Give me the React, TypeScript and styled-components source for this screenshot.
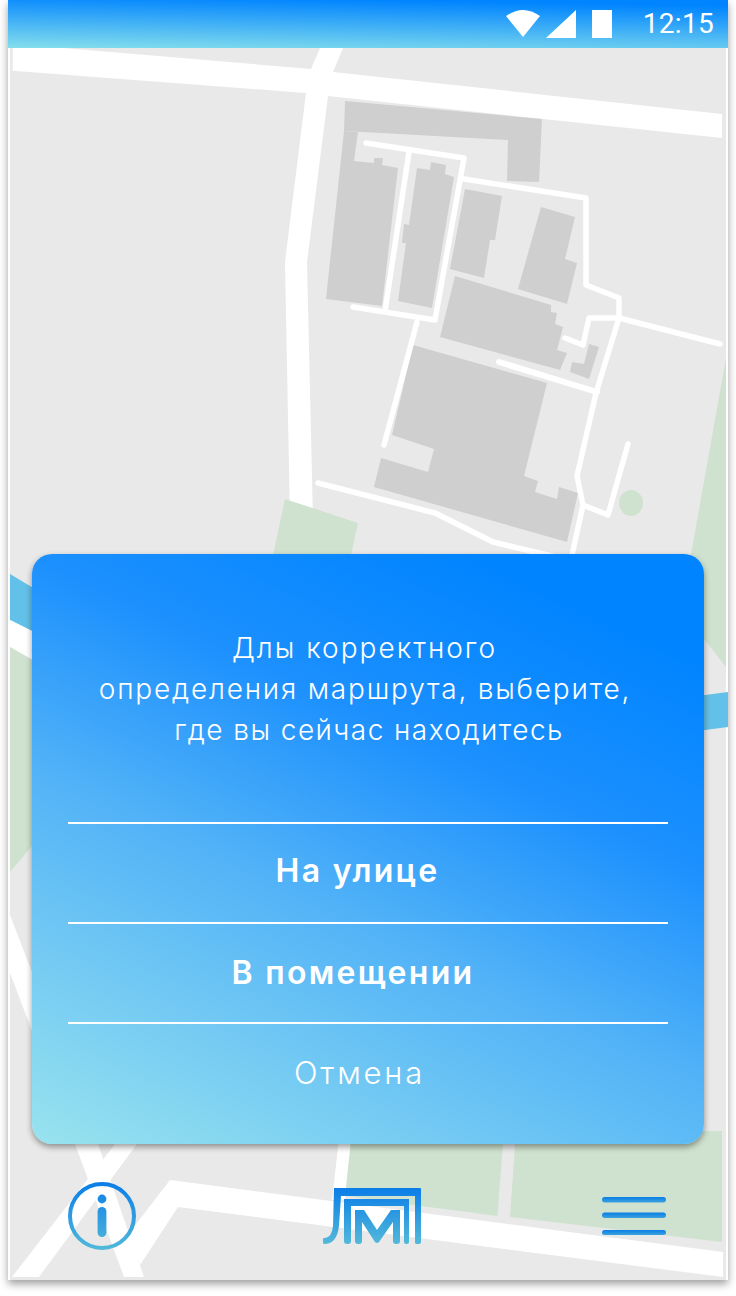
import React from "react";
import styled, { createGlobalStyle } from "styled-components";

const GlobalStyle = createGlobalStyle`
  html, body {
    margin: 0;
    padding: 0;
    background: #ffffff;
  }
`;

const Page = styled.div`
  width: 736px;
  height: 1296px;
  padding: 0 8px;
  box-sizing: border-box;
  overflow: hidden;
`;

const Phone = styled.div`
  width: 720px;
  height: 1280px;
  background: #ffffff;
  display: flex;
  flex-direction: column;
  box-shadow: 0 4px 8px rgba(0, 0, 0, 0.38);
`;

const StatusBar = styled.div`
  height: 48px;
  flex: none;
  display: flex;
  align-items: center;
  justify-content: flex-end;
  padding-right: 14px;
  background: linear-gradient(181deg, #0084ff 10%, #84deec 100%);
  position: relative;
  z-index: 2;
`;

const StatusIcon = styled.svg<{ $gap: number }>`
  display: block;
  margin-right: ${(p) => p.$gap}px;
  fill: #ffffff;
`;

const Clock = styled.span`
  font-family: Roboto, sans-serif;
  font-size: 28px;
  color: #ffffff;
  line-height: 48px;
  letter-spacing: 0.3px;
`;

const Screen = styled.div`
  position: relative;
  flex: 1;
  display: flex;
  flex-direction: column;
  padding: 506px 24px 0;
`;

const MapCanvas = styled.svg`
  position: absolute;
  top: 0;
  left: 0;
`;

const Dialog = styled.div`
  position: relative;
  height: 590px;
  box-sizing: border-box;
  padding: 74px 36px 0;
  border-radius: 20px;
  background: linear-gradient(
    205deg,
    #0084ff 12%,
    #1c90fe 35%,
    #51b2f7 58%,
    #98e3ee 100%
  );
  box-shadow: 0 3px 6px rgba(0, 0, 0, 0.4);
  font-family: Inter, "Noto Sans", sans-serif;
  color: #ffffff;
  text-align: center;
`;

const Message = styled.div`
  height: 194px;
  box-sizing: border-box;
`;

const MessageLine = styled.div<{ $left?: number; $right?: number; $tracking: number }>`
  font-size: 28px;
  font-weight: 300;
  line-height: 41px;
  letter-spacing: ${(p) => p.$tracking}px;
  white-space: nowrap;
  padding-left: ${(p) => p.$left || 0}px;
  padding-right: ${(p) => p.$right || 0}px;
`;

const Option = styled.div<{ $shift: number; $lift: number; $muted?: boolean }>`
  height: 100px;
  box-sizing: border-box;
  border-top: 2px solid #ffffff;
  display: flex;
  align-items: center;
  justify-content: center;
  padding-right: ${(p) => p.$shift}px;
  padding-bottom: ${(p) => p.$lift}px;
  font-size: ${(p) => (p.$muted ? 31 : 32)}px;
  font-weight: ${(p) => (p.$muted ? 300 : 600)};
  letter-spacing: ${(p) => (p.$muted ? 2.8 : 2.3)}px;
`;

const BottomNav = styled.div`
  position: relative;
  display: flex;
  align-items: center;
  height: 68px;
  margin-top: 38px;
  padding-left: 36px;
`;

const NavIcon = styled.svg<{ $gap?: number }>`
  display: block;
  flex: none;
  margin-left: ${(p) => p.$gap || 0}px;
`;

const CityMap = () => (
  <MapCanvas width="720" height="1232" viewBox="8 48 720 1232">
    <rect x="10" y="48" width="716" height="1232" fill="#e9e9e9" />

    {/* rivers */}
    <g fill="#63c0e8">
      <polygon points="10,574 50,598 50,640 10,620" />
      <polygon points="690,697 728,692 728,727 690,732" />
    </g>

    {/* main roads */}
    <g fill="#ffffff">
      <polygon points="12.7,48 63,48 311,69 320,48 343,48 333,72 722,114 722,138 328,96 307,262 313,520 290,520 285,262 306,93 12.7,70.7" />
      <polygon points="10,620 50,640 50,670 10,647" />
      <polygon points="10,915 98,1144 144,1277 124,1277 75,1144 10,973" />
      <polygon points="115,1144 137,1144 39,1277 12,1277" />
      <polygon points="170,1180 723,1252 723,1277 178,1207 140,1265 127,1232 130,1232" />
      <polygon points="340,1130 354,1130 345,1200 332,1200" />
    </g>

    {/* parks */}
    <g fill="#cfe2cf">
      <polygon points="285,499 358,523 350,560 272,560" />
      <polygon points="726,358 726,667 700,634 690,560" />
      <polygon points="10,647 50,670 50,825 10,872" />
      <polygon points="352,1131 504,1131 497.5,1216 345,1196" />
      <polygon points="516,1131 722,1131 722,1242 510,1217" />
      <ellipse cx="631" cy="503" rx="12" ry="13" />
    </g>

    {/* buildings */}
    <g fill="#cfcfcf">
      <polygon points="345,101 542,119 539,182 507,181 508,140 344,131" />
      <polygon points="344,131 358,132 354,161 374,163 374,158 383,158 382,165 398,168 382,306 326,299" />
      <polygon points="417,168 430,170 431,162 446,165 445,174 454,177 432,308 398,301 406,243 402,243 404,224 409,225" />
      <polygon points="465,189 502,196 495,240 490,240 484,278 450,269" />
      <polygon points="541,207 575,217 565,259 577,263 567,304 518,289" />
      <polygon points="455,276 551,305 551,312 557,313 555,324 563,327 557,350 567,353 560,370 440,337" />
      <polygon points="589,344 599,347 589,379 570,372 572,362 584,364" />
      <polygon points="413,345 547,383 524,476 538,481 535,492 557,499 559,487 578,493 567,542 374,487 381,458 428,472 434,449 392,435" />
    </g>

    {/* footpaths */}
    <g fill="none" stroke="#ffffff" strokeWidth="5.5" strokeLinecap="round" strokeLinejoin="round">
      <polyline points="366,143 464,158 435,320 353,307" />
      <polyline points="409,152 385,311" />
      <polyline points="464,179 586,198 586,285 619,298 619,318" />
      <polyline points="619,318 720,344" />
      <polyline points="565,338 583,345 589,318 619,318" />
      <polyline points="619,318 596,393 577,476 583,505 608,515 628,444" />
      <polyline points="583,505 571,560" />
      <polyline points="499,362 597,392" strokeWidth="6" />
      <polyline points="417,322 384,445" />
      <polyline points="318,483 435,513 493,542 560,558" />
    </g>
  </MapCanvas>
);

const InfoIcon = () => (
  <NavIcon width="68" height="68" viewBox="0 0 68 68">
    <defs>
      <linearGradient id="infoGrad" gradientUnits="userSpaceOnUse" x1="0" y1="0" x2="0" y2="68">
        <stop offset="0" stopColor="#0a7de8" />
        <stop offset="1" stopColor="#52b9d9" />
      </linearGradient>
    </defs>
    <circle cx="34" cy="34" r="32" fill="none" stroke="url(#infoGrad)" strokeWidth="4" />
    <circle cx="34" cy="17" r="4.4" fill="url(#infoGrad)" />
    <rect x="29.6" y="25" width="8.8" height="30" rx="4.4" fill="url(#infoGrad)" />
  </NavIcon>
);

const LogoIcon = () => (
  <NavIcon $gap={187} width="98" height="56" viewBox="323 1188 98 56">
    <defs>
      <linearGradient id="logoGrad" gradientUnits="userSpaceOnUse" x1="0" y1="1188" x2="0" y2="1244">
        <stop offset="0" stopColor="#0a7de8" />
        <stop offset="1" stopColor="#52b9d9" />
      </linearGradient>
    </defs>
    <g fill="url(#logoGrad)">
      <path d="M334 1188 H420 Q421 1188 421 1189 V1242 Q421 1244 419 1244 H416 Q415 1244 415 1242 V1196 H341 L339 1226 Q337 1244 324 1244 Q323 1244 323 1242 V1239 Q323 1238 325 1238 Q332 1237 333 1226 Z" />
      <path d="M344 1199 H409 V1242 Q409 1244 407 1244 H406 Q404 1244 404 1242 V1206 H351 V1241 Q351 1244 348 1244 H347 Q344 1244 344 1241 Z" />
      <path d="M355 1210 H364 L377 1230 L391 1210 H400 V1241 Q400 1244 397 1244 H396 Q393 1244 393 1241 V1222 L379 1242 Q377 1244 375 1242 L362 1222 V1241 Q362 1244 359 1244 H358 Q355 1244 355 1241 Z" />
    </g>
  </NavIcon>
);

const MenuIcon = () => (
  <NavIcon $gap={181} width="64" height="38" viewBox="0 0 64 38">
    <defs>
      <linearGradient id="menuGrad" x1="0" y1="0" x2="0" y2="1">
        <stop offset="0" stopColor="#0a7de8" />
        <stop offset="1" stopColor="#3ba3dc" />
      </linearGradient>
    </defs>
    <rect x="0" y="0" width="64" height="5.5" rx="2.75" fill="url(#menuGrad)" />
    <rect x="0" y="15.5" width="64" height="5.5" rx="2.75" fill="url(#menuGrad)" />
    <rect x="0" y="33" width="64" height="5" rx="2.5" fill="url(#menuGrad)" />
  </NavIcon>
);

export default function App() {
  return (
    <Page>
      <GlobalStyle />
      <Phone>
        <StatusBar>
          <StatusIcon $gap={6} width="34" height="28" viewBox="0 0 34 28">
            <path d="M0 6 Q17 -6 34 6 L17 27 Z" />
          </StatusIcon>
          <StatusIcon $gap={16} width="30" height="28" viewBox="0 0 30 28">
            <polygon points="0,28 30,28 30,0" />
          </StatusIcon>
          <StatusIcon $gap={31} width="20" height="28" viewBox="0 0 20 28">
            <rect width="20" height="28" />
          </StatusIcon>
          <Clock>12:15</Clock>
        </StatusBar>
        <Screen>
          <CityMap />
          <Dialog>
            <Message>
              <MessageLine $right={7} $tracking={2}>
                Длы корректного
              </MessageLine>
              <MessageLine $right={6} $tracking={1.8}>
                определения маршрута, выберите,
              </MessageLine>
              <MessageLine $left={2} $tracking={1.45}>
                где вы сейчас находитесь
              </MessageLine>
            </Message>
            <Option $shift={21} $lift={5}>
              На улице
            </Option>
            <Option $shift={30} $lift={2}>
              В помещении
            </Option>
            <Option $shift={17} $lift={2} $muted>
              Отмена
            </Option>
          </Dialog>
          <BottomNav>
            <InfoIcon />
            <LogoIcon />
            <MenuIcon />
          </BottomNav>
        </Screen>
      </Phone>
    </Page>
  );
}
